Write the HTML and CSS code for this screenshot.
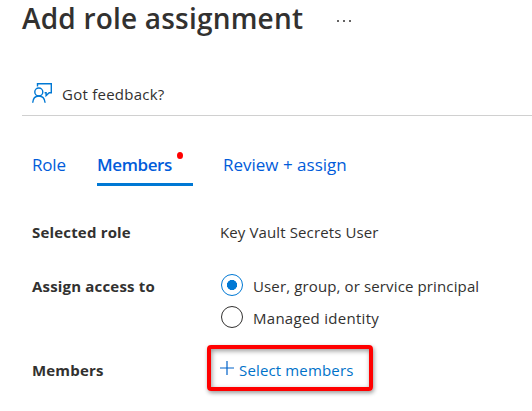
FILE: index.html
```html
<!DOCTYPE html>
<html lang="en">
<head>
<meta charset="utf-8">
<title>Add role assignment</title>
<link rel="stylesheet" href="styles.css">
</head>
<body>
<main class="page">
  <header class="header">
    <h1 class="title">Add role assignment</h1>
    <span class="more"><i></i><i></i><i></i></span>
  </header>
  <div class="toolbar">
    <svg class="feedback-icon" width="20" height="20" viewBox="0 0 20 20" fill="none" stroke="#0078d4" stroke-width="1.4">
      <path d="M5.500 3.500V.7h13.800v9.100h-2.100l-3.100 2.800V9.800h-1.500"/>
      <circle cx="6.800" cy="9" r="4"/>
      <path d="M.7 19.700C1 15.600 3.300 13 6.800 13s5.900 2.600 6.300 6.700"/>
    </svg>
    <span class="feedback">Got feedback?</span>
  </div>
  <nav class="tabs">
    <a class="tab role">Role</a>
    <a class="tab active"><span class="tab-label">Members</span><i class="dot"></i></a>
    <a class="tab review">Review + assign</a>
  </nav>
  <section class="form">
    <div class="label selected-label">Selected role</div>
    <div class="value">Key Vault Secrets User</div>
    <div class="label access-label">Assign access to</div>
    <div class="options">
      <div class="option"><span class="radio checked"></span><span class="user-text">User, group, or service principal</span></div>
      <div class="option"><span class="radio"></span><span class="managed-text">Managed identity</span></div>
    </div>
    <div class="label members-label">Members</div>
    <div class="select">
      <svg width="14" height="14" viewBox="0 0 14 14" stroke="#0062c9" stroke-width="1.2"><path d="M0 7h14M7 0v14"/></svg>
      <span class="select-text">Select members</span>
    </div>
  </section>
</main>
</body>
</html>
```
FILE: styles.css
```css
body { margin: 0; background: #fff; color: #323130; font: 15px/22px "Open Sans", sans-serif; }
.page { padding-left: 22px; height: 411px; overflow: hidden; box-sizing: border-box; white-space: nowrap; }
.header { display: flex; height: 72px; }
.title { margin: 0; width: 315px; font-size: 28px; line-height: 37px; font-weight: 600; letter-spacing: .2px; }
.more { display: flex; gap: 4px; padding-top: 20px; }
.more i { width: 2px; height: 2px; border-radius: 1px; background: #323130; }
.toolbar { display: flex; align-items: center; height: 44px; box-sizing: border-box; padding-left: 10px; border-bottom: 1px solid #d0d0d0; gap: 10px; }
.feedback-icon { flex: none; margin-top: -2px; }
.feedback { padding-top: 1px; letter-spacing: .25px; }
.tabs { display: flex; height: 69px; margin-left: 10px; padding-top: 32px; box-sizing: border-box; font-size: 17px; line-height: 34px; color: #015cda; }
.role { width: 65px; letter-spacing: -.2px; }
.active { display: flex; width: 96px; height: 38px; box-sizing: border-box; border-bottom: 3px solid #0078d4; font-weight: 600; letter-spacing: -.4px; }
.tab-label { flex: none; }
.dot { width: 6px; height: 7px; border-radius: 50%; background: #f00; margin: 4px 10px 0 auto; }
.review { margin-left: 30px; }
.form { display: grid; grid-template-columns: 187px 1fr; grid-template-rows: 84px 77px 44px; margin-left: 10px; }
.label { font-weight: 700; padding-top: 36px; letter-spacing: .18px; }
.value { padding: 36px 0 0 1px; letter-spacing: .12px; }
.access-label { padding-top: 6px; }
.options { display: flex; flex-direction: column; gap: 9px; padding: 4px 0 0 2px; }
.option { display: flex; align-items: center; gap: 10px; height: 23px; }
.option span:last-child { padding-top: 2px; }
.radio { width: 22px; height: 22px; box-sizing: border-box; border: 1px solid #323130; border-radius: 50%; flex: none; }
.checked { border-color: #0078d4; background: radial-gradient(circle, #0078d4 0 4.8px, transparent 5.3px); }
.user-text { letter-spacing: .13px; }
.managed-text { letter-spacing: .28px; }
.members-label { padding-top: 13px; }
.select { width: 166px; height: 46px; margin: -1px 0 0 -12px; box-sizing: border-box; border: 4px solid #f00; border-radius: 4px; display: flex; align-items: center; gap: 5px; padding-left: 9px; color: #0072c9; box-shadow: 1px 2px 4px #0006, inset 1px 2px 5px #0006; }
.select svg { flex: none; margin-top: -1px; }
.select-text { padding-top: 4px; letter-spacing: .15px; }
```
